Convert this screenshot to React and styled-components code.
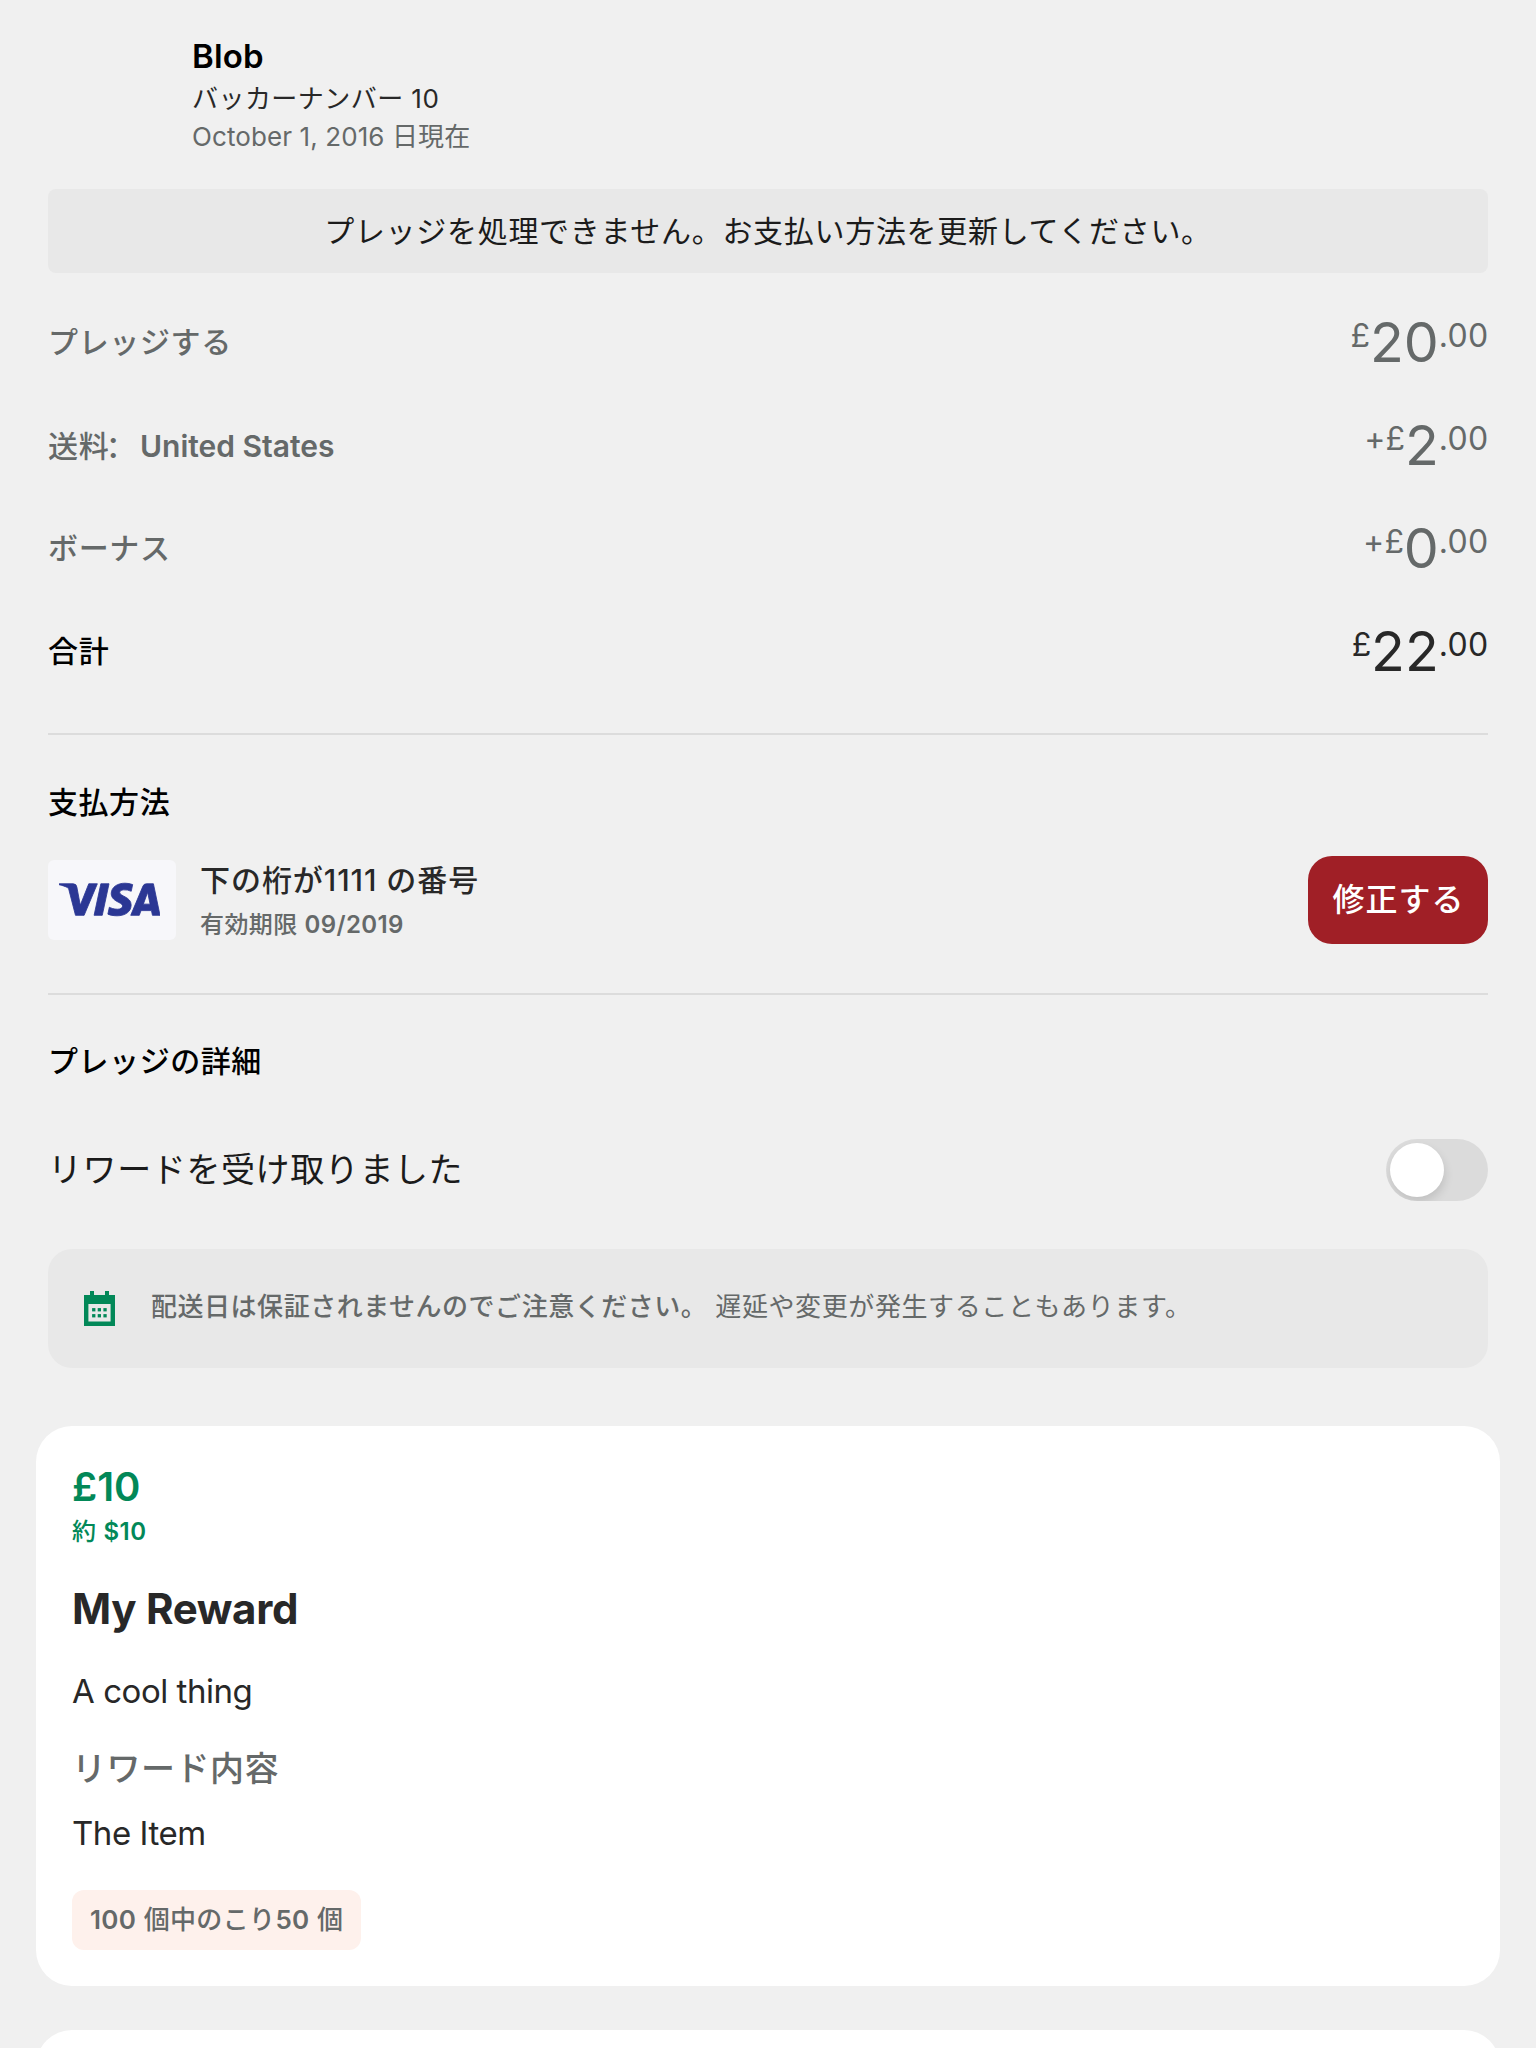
import React from "react";
import styled, { createGlobalStyle } from "styled-components";
import { SiVisa } from "react-icons/si";

const color = {
  page: "#f0f0f0",
  panel: "#e8e8e8",
  line: "#dcdcdc",
  black: "#000000",
  text: "#282828",
  muted: "#656969",
  green: "#028858",
  red: "#a01f26",
};

const GlobalStyle = createGlobalStyle`
  * { box-sizing: border-box; }
  body {
    margin: 0;
    background: ${color.page};
    font-family: Inter, "Noto Sans CJK JP", sans-serif;
    color: ${color.text};
  }
`;

const Screen = styled.main`
  width: 1536px;
  height: 2048px;
  overflow: hidden;
  background: ${color.page};
`;

const Content = styled.div`
  padding: 0 48px;
`;

const Header = styled.header`
  height: 189px;
  padding: 36px 0 0 144px;
`;

const Name = styled.h1`
  margin: 0 0 4px;
  font-size: 33px;
  font-weight: 600;
  line-height: 40px;
  letter-spacing: 0.2px;
  color: ${color.black};
`;

const Meta = styled.div`
  font-size: 26px;
  line-height: 38px;
  letter-spacing: ${(p) => p.$spacing};
  color: ${(p) => (p.$muted ? color.muted : color.text)};
`;

const Banner = styled.div`
  display: flex;
  align-items: center;
  justify-content: center;
  height: 84px;
  border-radius: 8px;
  background: ${color.panel};
  font-size: 30px;
  line-height: 44px;
  letter-spacing: 0.7px;
  color: #1b1b1b;
`;

const Summary = styled.section`
  padding: 18px 0 30px;
  border-bottom: 2px solid ${color.line};
`;

const SummaryRow = styled.div`
  display: flex;
  align-items: center;
  justify-content: space-between;
  height: 103px;
  color: ${(p) => (p.$total ? color.text : color.muted)};
`;

const SummaryLabel = styled.span`
  margin-bottom: 1px;
  font-size: 30px;
  line-height: 44px;
  font-weight: 500;
  letter-spacing: 0.65px;
  color: ${(p) => (p.$total ? color.black : color.muted)};
`;

const Colon = styled.span`
  margin: 0 3.5px 0 -3.5px;
  font-family: "Noto Sans CJK SC", sans-serif;
`;

const Place = styled.span`
  font-weight: 600;
  letter-spacing: 0;
`;

const Money = styled.span`
  margin: 0 0 1px;
  font-size: 55.5px;
  line-height: 64px;
  letter-spacing: 0;
  white-space: nowrap;
`;

const Minor = styled.span`
  margin-right: -0.5px;
  font-size: 32px;
  line-height: 0;
  letter-spacing: 0.3px;
  vertical-align: 15.5px;
`;

const SectionTitle = styled.h2`
  margin: 0;
  font-size: 30px;
  line-height: 44px;
  font-weight: 500;
  letter-spacing: 0.55px;
  color: ${color.black};
`;

const Payment = styled.section`
  padding: 45px 0 49px;
  border-bottom: 2px solid ${color.line};
`;

const PaymentRow = styled.div`
  display: flex;
  align-items: center;
  height: 88px;
  margin-top: 32px;
`;

const CardBadge = styled.div`
  display: flex;
  align-items: center;
  justify-content: center;
  width: 128px;
  height: 80px;
  padding: 0 5px 1px 0;
  border-radius: 6px;
  background: #f7f7fa;
  color: #2b3794;
`;

const VisaMark = styled(SiVisa)`
  width: 101px;
  height: 101px;
  flex: none;
  stroke: currentColor;
  stroke-width: 0.2;
`;

const CardInfo = styled.div`
  flex: 1;
  padding: 5px 0 0 24px;
`;

const CardNumber = styled.div`
  font-size: 30px;
  line-height: 44px;
  font-weight: 500;
  letter-spacing: 0.95px;
`;

const CardExpiry = styled.div`
  font-size: 24px;
  line-height: 45px;
  font-weight: 500;
  letter-spacing: 0.4px;
  color: ${color.muted};
`;

const Digits = styled.span`
  font-weight: 600;
`;

const FixButton = styled.button`
  width: 180px;
  height: 88px;
  padding: 0 0 0 1px;
  border: 0;
  border-radius: 24px;
  background: ${color.red};
  color: #ffffff;
  font: 500 32px/48px Inter, "Noto Sans CJK JP", sans-serif;
  letter-spacing: 1px;
`;

const Details = styled.section`
  padding: 44px 0 58px;
`;

const ToggleRow = styled.div`
  display: flex;
  align-items: center;
  justify-content: space-between;
  height: 62px;
  margin: 56px 0 48px;
  font-size: 34px;
  line-height: 48px;
  letter-spacing: 0.6px;
  color: #1b1b1b;
`;

const Switch = styled.div`
  width: 102px;
  height: 62px;
  padding: 4px;
  border-radius: 31px;
  background: #dbdbdb;
  overflow: hidden;
`;

const Knob = styled.div`
  width: 54px;
  height: 54px;
  border-radius: 50%;
  background: #ffffff;
  box-shadow: 1px 5px 10px rgba(0, 0, 0, 0.12);
`;

const Notice = styled.div`
  display: flex;
  align-items: center;
  gap: 36px;
  height: 119px;
  padding: 0 36px;
  border-radius: 24px;
  background: ${color.panel};
`;

const NoticeText = styled.p`
  margin: 0 0 3px;
  font-size: 26px;
  line-height: 38px;
  letter-spacing: 0.6px;
  color: ${color.muted};
`;

const Strong = styled.span`
  font-weight: 500;
  letter-spacing: 0.53px;
`;

const Rewards = styled.section`
  display: flex;
  flex-direction: column;
  gap: 44px;
  padding: 0 36px;
`;

const RewardCard = styled.article`
  height: 560px;
  flex: none;
  padding: 37px 36px 36px;
  border-radius: 36px;
  background: #ffffff;
`;

const Price = styled.div`
  font-size: 40px;
  line-height: 48px;
  font-weight: 600;
  color: ${color.green};
`;

const Converted = styled.div`
  margin-top: 6px;
  font-size: 24px;
  line-height: 30px;
  font-weight: 500;
  letter-spacing: 0.5px;
  color: ${color.green};
`;

const RewardTitle = styled.h3`
  margin: 36px 0 35px;
  font-size: 42px;
  line-height: 52px;
  font-weight: 700;
  letter-spacing: -0.3px;
`;

const BodyText = styled.div`
  font-size: 33px;
  line-height: 42px;
  letter-spacing: -0.45px;
`;

const ItemsTitle = styled.div`
  margin: 35px 0 21px;
  font-size: 34px;
  line-height: 44px;
  font-weight: 500;
  letter-spacing: 0.5px;
  color: ${color.muted};
`;

const Tag = styled.div`
  width: 289px;
  height: 60px;
  margin-top: 36px;
  padding: 11px 0 0 18px;
  border-radius: 12px;
  background: #fef1ec;
  font-size: 26px;
  line-height: 38px;
  font-weight: 500;
  letter-spacing: 0.35px;
  white-space: nowrap;
  color: ${color.muted};
`;

function CalendarIcon() {
  return (
    <svg width="31" height="35" viewBox="0 0 31 35" fill={color.green}>
      <path
        fillRule="evenodd"
        d="M0 4h6V0h4v4h11V0h4v4h6v31H0zM4.4 13v17.6h22.2V13z"
      />
      {[8.1, 13.7, 19.4].map((x) => (
        <React.Fragment key={x}>
          <rect x={x} y="17.1" width="3.3" height="3.3" />
          <rect x={x} y="23.1" width="3.3" height="3.3" />
        </React.Fragment>
      ))}
    </svg>
  );
}

function Amount({ prefix, value }) {
  return (
    <Money>
      <Minor>{prefix}</Minor>
      {value}
      <Minor>.00</Minor>
    </Money>
  );
}

const rows = [
  { id: "pledge", label: "プレッジする", prefix: "£", value: "20" },
  {
    id: "shipping",
    label: (
      <>
        送料<Colon>：</Colon>
        <Place>United States</Place>
      </>
    ),
    prefix: "+£",
    value: "2",
  },
  { id: "bonus", label: "ボーナス", prefix: "+£", value: "0" },
  { id: "total", label: "合計", prefix: "£", value: "22", total: true },
];

export default function App() {
  return (
    <Screen>
      <GlobalStyle />
      <Content>
        <Header>
          <Name>Blob</Name>
          <Meta $spacing="0.45px">バッカーナンバー 10</Meta>
          <Meta $spacing="0.1px" $muted>
            October 1, 2016 日現在
          </Meta>
        </Header>
        <Banner>プレッジを処理できません。お支払い方法を更新してください。</Banner>
        <Summary>
          {rows.map((r) => (
            <SummaryRow key={r.id} $total={r.total}>
              <SummaryLabel $total={r.total}>{r.label}</SummaryLabel>
              <Amount prefix={r.prefix} value={r.value} />
            </SummaryRow>
          ))}
        </Summary>
        <Payment>
          <SectionTitle>支払方法</SectionTitle>
          <PaymentRow>
            <CardBadge>
              <VisaMark />
            </CardBadge>
            <CardInfo>
              <CardNumber>下の桁が1111 の番号</CardNumber>
              <CardExpiry>
                有効期限 <Digits>09/2019</Digits>
              </CardExpiry>
            </CardInfo>
            <FixButton>修正する</FixButton>
          </PaymentRow>
        </Payment>
        <Details>
          <SectionTitle>プレッジの詳細</SectionTitle>
          <ToggleRow>
            リワードを受け取りました
            <Switch role="switch" aria-checked="false">
              <Knob />
            </Switch>
          </ToggleRow>
          <Notice>
            <CalendarIcon />
            <NoticeText>
              <Strong>配送日は保証されませんのでご注意ください。</Strong>{" "}
              遅延や変更が発生することもあります。
            </NoticeText>
          </Notice>
        </Details>
      </Content>
      <Rewards>
        <RewardCard>
          <Price>£10</Price>
          <Converted>
            約 <Digits>$10</Digits>
          </Converted>
          <RewardTitle>My Reward</RewardTitle>
          <BodyText>A cool thing</BodyText>
          <ItemsTitle>リワード内容</ItemsTitle>
          <BodyText>The Item</BodyText>
          <Tag>
            <Digits>100</Digits> 個中のこり<Digits>50</Digits> 個
          </Tag>
        </RewardCard>
        <RewardCard />
      </Rewards>
    </Screen>
  );
}
